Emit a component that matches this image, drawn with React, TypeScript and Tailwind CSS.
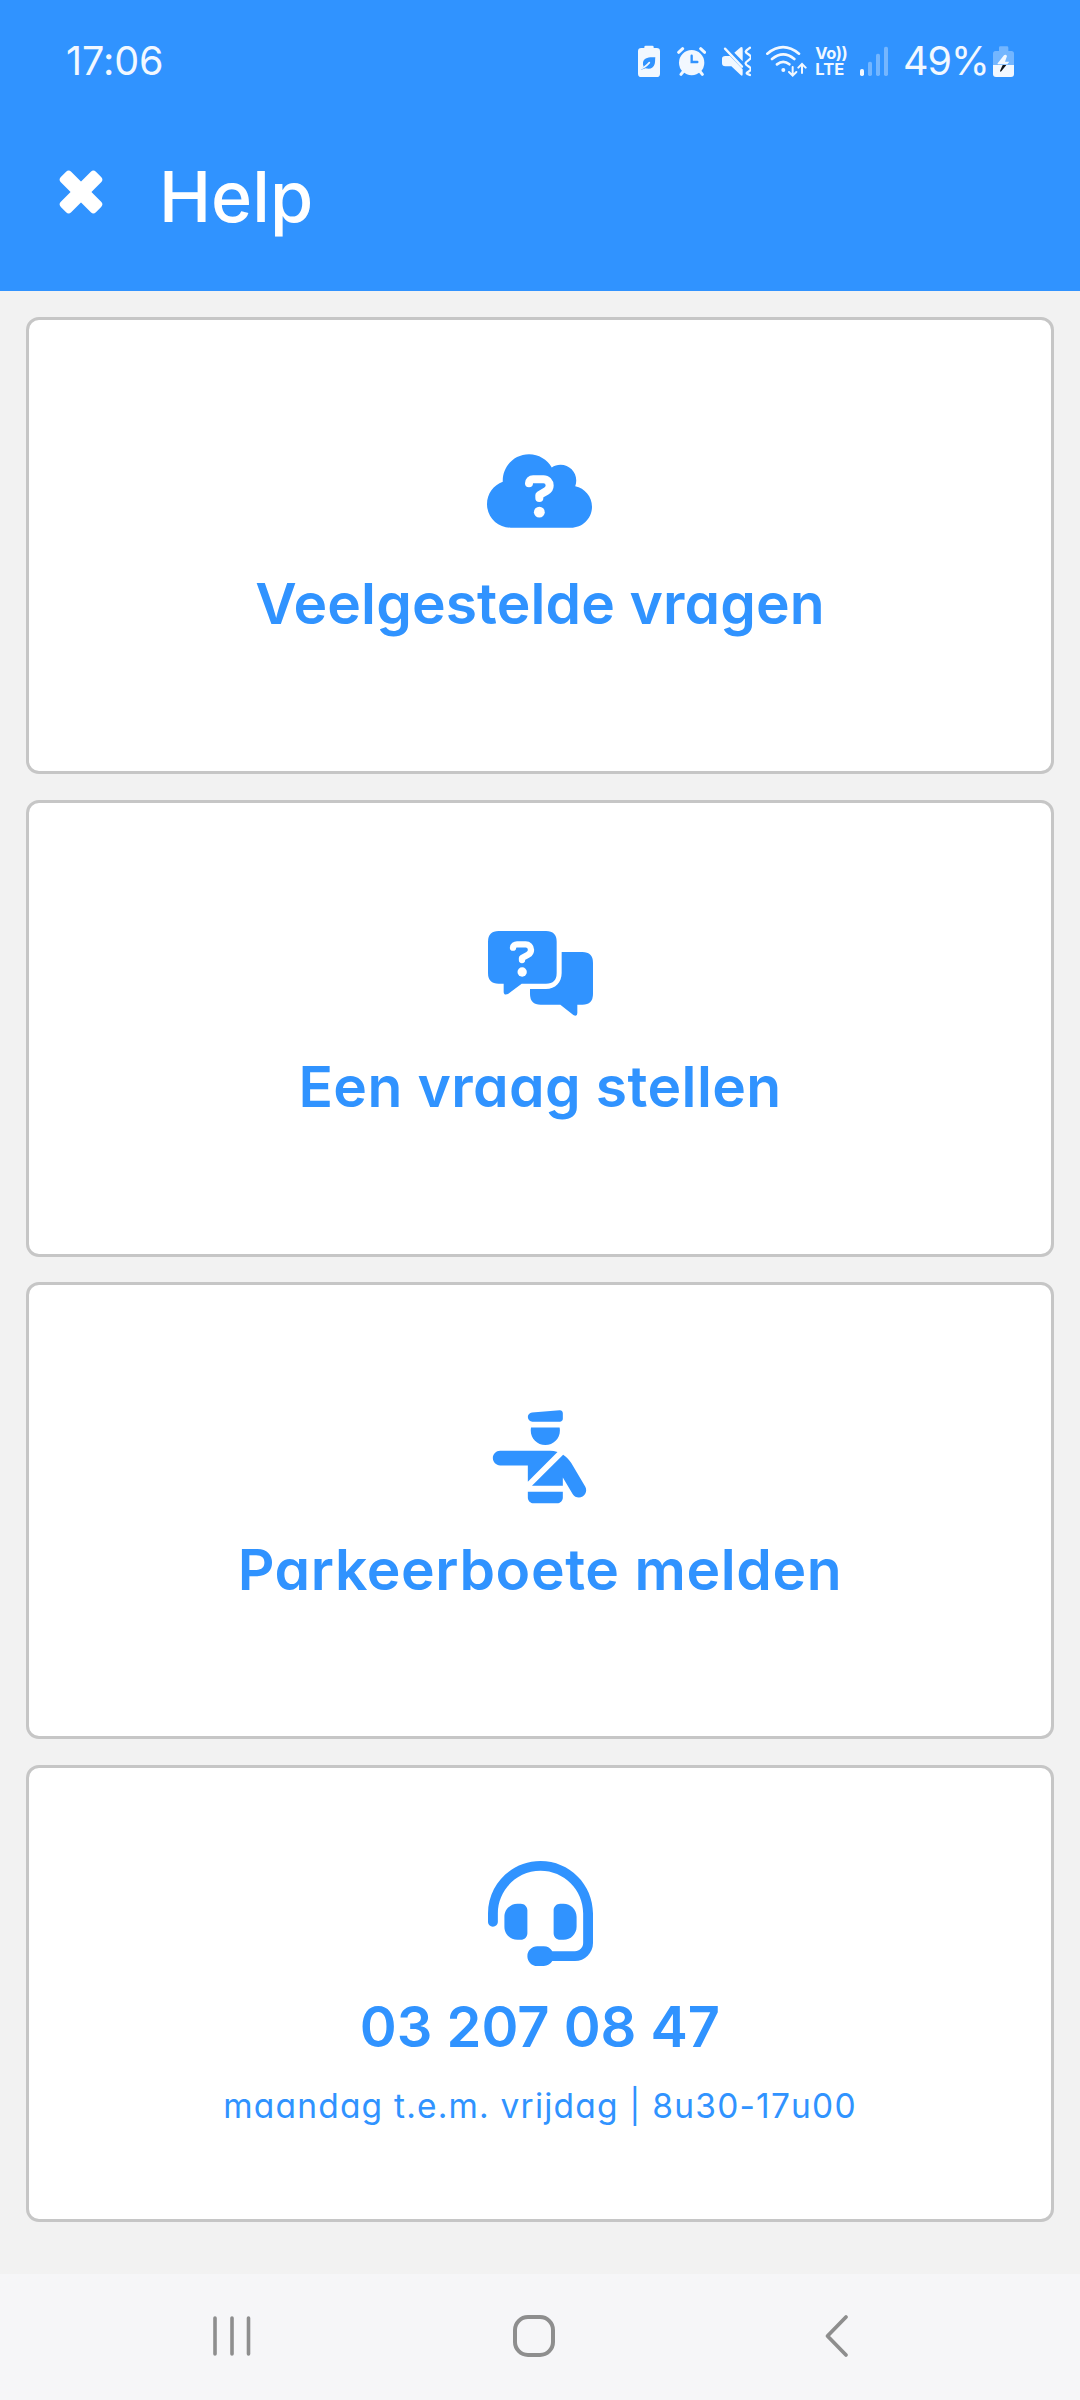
import React from 'react';
import { FaHeadset } from 'react-icons/fa6';

const BatterySaverIcon = () => (
  <svg viewBox="54 45 66 99" className="w-[22px] h-[33px]" fill="currentColor">
    <path d="M73 54v-3q0-4 4-4h20q4 0 4 4v3h9q10 0 10 10v67q0 10-10 10H64q-10 0-10-10V64q0-10 10-10z" />
    <path d="M106 82C86 80 70 84 69 98q-1 6 2 11-6 5-8 10 8-1 13-4 22 6 28-13c2-6 1-14 2-20z" fill="#3093ff" />
    <path d="M62 116q12-2 26-18" fill="none" stroke="currentColor" strokeWidth="5" strokeLinecap="round" />
  </svg>
);

const AlarmIcon = () => (
  <svg viewBox="170 45 88 99" className="w-[29.33px] h-[33px]" fill="none" stroke="currentColor" strokeLinecap="round">
    <circle cx="214" cy="98" r="38" fill="currentColor" stroke="none" />
    <path d="M175 67l12-11M253 67l-12-11M190 123l-8 10M238 123l8 10" strokeWidth="9" />
    <path d="M214 77v19h17" stroke="#3093ff" strokeWidth="7" />
  </svg>
);

const MuteVibrateIcon = () => (
  <svg viewBox="306 45 88 99" className="w-[29.33px] h-[33px]" fill="currentColor">
    <path d="M330 78l38 40v14q0 8-6 3l-28-26h-18q-10 0-10-9V86q0-8 10-8z" />
    <path d="M343 68l19-16q6-4 6 4v38z" />
    <path d="M315 56l51 54" fill="none" stroke="currentColor" strokeWidth="7" strokeLinecap="round" />
    <path d="M390 53c-16 11-16 13-5 20s11 10 0 18-11 11 0 18 11 10 0 16 0 8 5 10" fill="none" stroke="currentColor" strokeWidth="7" strokeLinecap="round" />
  </svg>
);

const WifiIcon = () => (
  <svg viewBox="437 45 123 99" className="w-[41px] h-[33px]" fill="none" stroke="currentColor" strokeWidth="8" strokeLinecap="round">
    <path d="M441 71q47-39 95 0M455 87q34-28 67 0M470 103q19-15 37 0" />
    <circle cx="489" cy="120" r="6" fill="currentColor" stroke="none" />
    <path d="M517 111v24M506 126l11 11 11-11M545 129v-25M534 113l11-11 11 11" strokeWidth="6" />
  </svg>
);

const SignalIcon = () => (
  <svg viewBox="120 45 84 99" className="w-7 h-[33px]" fill="currentColor">
    <rect x="120" y="117" width="12" height="21" rx="5" />
    <g opacity="0.35">
      <rect x="144" y="95" width="12" height="43" rx="5" />
      <rect x="168" y="71" width="12" height="67" rx="5" />
      <rect x="192" y="50" width="12" height="88" rx="5" />
    </g>
  </svg>
);

const ChargingIcon = () => (
  <svg viewBox="519 45 63 99" className="w-[21px] h-[33px]" fill="currentColor">
    <path d="M537 63V53q0-4 4-4h20q4 0 4 4v10h9q8 0 8 8v34h-63V71q0-8 8-8z" opacity="0.35" />
    <path d="M519 105h63v27q0 9-9 9h-45q-9 0-9-9z" />
    <path d="M552 76l-19 24q-2 3 2 3h27l6-8h-13l6-17q-4-6-9-2z" />
    <path d="M548 105l-8 18q0 4 4 1l15-19z" fill="#10151c" />
  </svg>
);

const CloseIcon = () => (
  <svg viewBox="-22 -22 44 44" className="w-11 h-11" fill="currentColor">
    <rect x="-24.8" y="-7.3" width="49.6" height="14.6" rx="3.6" transform="rotate(45)" />
    <rect x="-24.8" y="-7.3" width="49.6" height="14.6" rx="3.6" transform="rotate(-45)" />
  </svg>
);

const CloudQuestionIcon = () => (
  <svg viewBox="0 0 640 512" className="mr-px w-[105px] h-[84px]" fill="currentColor">
    <path d="M0 336c0 79.5 64.5 144 144 144h368c70.7 0 128-57.3 128-128 0-61.9-44-113.6-102.4-125.4 4.1-10.7 6.4-22.4 6.4-34.6 0-53-43-96-96-96-19.7 0-38.1 6-53.3 16.2C367 64.2 315.3 32 256 32 167.6 32 96 103.6 96 192c0 2.7.1 5.4.2 8.1C40.2 219.8 0 273.2 0 336z" />
    <path d="M256 209c0-14 11-25 25-25h63c22 0 38 17 38 39 0 14-8 26-20 33l-43 25v18" fill="none" stroke="#fff" strokeWidth="49" strokeLinecap="round" strokeLinejoin="round" />
    <circle cx="319" cy="385" r="33" fill="#fff" />
  </svg>
);

const MessagesQuestionIcon = () => (
  <svg viewBox="84 64 315 254" className="w-[105px] h-[84.67px]" fill="currentColor">
    <path d="M116 64h142q32 0 32 32v94q0 32-32 32h-73l-41 31q-13 5-13-7v-24h-15q-32 0-32-32V96q0-32 32-32z" />
    <path d="M305 127h62q32 0 32 32v94q0 32-32 32h-15v25q0 12-12 6l-39-31h-59q-32 0-32-32v-15h48c28 0 47-20 47-48z" />
    <path d="M159 114c0-6 6-10 12-10h26c9 0 16 7 16 16 0 7-3 12-9 15l-18 10v6" fill="none" stroke="#fff" strokeWidth="19" strokeLinecap="round" strokeLinejoin="round" />
    <circle cx="186.5" cy="187" r="14" fill="#fff" />
  </svg>
);

const OfficerIcon = () => (
  <svg viewBox="0 0 576 512" className="mr-[2px] w-[105px] h-[93.33px]" fill="currentColor">
    <path d="M246.9 14.1C234 15.2 224 26 224 39c0 13.8 11.2 25 25 25h151c8.8 0 16-7.2 16-16V17.4C416 8 408 .7 398.7 1.4L246.9 14.1zM240 112c0 44.2 35.8 80 80 80s80-35.8 80-80c0-5.5-.6-10.8-1.6-16H241.6c-1 5.2-1.6 10.5-1.6 16zM72 224c-22.1 0-40 17.9-40 40s17.9 40 40 40h152v89.4l162.8-162.9c-13.3-4.3-27.3-6.5-41.6-6.5H72zm345.7 20.9L246.6 416H416v-46.2l53.6 90.6c11.2 19 35.8 25.3 54.8 14.1s25.3-35.8 14.1-54.8l-76.2-128.9c-11.2-18.9-26.6-34.5-44.6-45.9zM224 448v32c0 17.7 14.3 32 32 32h128c17.7 0 32-14.3 32-32v-32H224z" />
  </svg>
);

interface HelpCardProps {
  icon: React.ReactNode;
  label: string;
  labelClass: string;
  padding: string;
  note?: string;
}

const HelpCard: React.FC<HelpCardProps> = ({ icon, label, labelClass, padding, note }) => (
  <button className={`flex h-[457px] w-full flex-col items-center rounded-[13px] border-3 border-[#c6c6c6] bg-white text-[#3093ff] ${padding}`}>
    {icon}
    <span className={`whitespace-nowrap font-semibold leading-[70px] ${labelClass}`}>{label}</span>
    {note && <span className="mt-[24px] whitespace-nowrap text-[33.5px] leading-[40px] tracking-[1.2px]">{note}</span>}
  </button>
);

export default function App() {
  return (
    <div className="flex h-[2400px] w-[1080px] flex-col overflow-hidden bg-[#f2f2f2] font-['Inter',sans-serif] [font-feature-settings:'cv11']">
      <header className="h-[291px] bg-[#3093ff] text-white">
        {/* status bar */}
        <div className="flex h-[78px] pl-[66px] pt-[45px] text-[#f2f8ff]">
          <span className="w-[572px] text-[39.5px] leading-[33px] tracking-[-0.1px]">17:06</span>
          <BatterySaverIcon />
          <div className="ml-[16.7px]"><AlarmIcon /></div>
          <div className="ml-4"><MuteVibrateIcon /></div>
          <div className="ml-[14.4px]"><WifiIcon /></div>
          <div className="ml-[8.6px] w-[32px] text-[16.5px] font-bold leading-[16px]">
            <div className="whitespace-nowrap tracking-[-0.4px]">Vo))</div>
            <div className="whitespace-nowrap">LTE</div>
          </div>
          <div className="ml-[12.7px]"><SignalIcon /></div>
          <span className="ml-[15px] w-[90px] text-[39.5px] leading-[33px] tracking-[-1px]">49%</span>
          <ChargingIcon />
        </div>

        {/* title bar */}
        <div className="flex pl-[59px] pt-[72px]">
          <div className="mt-5"><CloseIcon /></div>
          <h1 className="ml-[56px] mt-px text-[70px] font-medium leading-[92px]">Help</h1>
        </div>
      </header>

      <main className="flex h-[1983px] flex-col gap-[25.67px] px-[26px] pt-[26px]">
        <HelpCard icon={<CloudQuestionIcon />} label="Veelgestelde vragen" padding="pt-[128.5px]" labelClass="mt-[36.5px] text-[57px] tracking-[0.1px]" />
        <HelpCard icon={<MessagesQuestionIcon />} label="Een vraag stellen" padding="pt-[128.5px]" labelClass="mt-[36px] text-[57px] tracking-[0.4px]" />
        <HelpCard icon={<OfficerIcon />} label="Parkeerboete melden" padding="pt-[125px]" labelClass="mt-[31px] text-[57px] tracking-[0.6px]" />
        <HelpCard
          icon={<FaHeadset className="h-[105px] w-[105px]" />}
          label="03 207 08 47"
          padding="pt-[93px]"
          labelClass="mt-[26px] text-[56px]"
          note="maandag t.e.m. vrijdag | 8u30-17u00"
        />
      </main>

      <nav className="flex h-[126px] items-center bg-[#f6f6f8] pb-[2px] pl-[212px] text-[#8e8e8e]">
        <svg viewBox="0 0 40 42" className="h-[42px] w-10" stroke="currentColor" strokeWidth="3.6" strokeLinecap="round">
          <path d="M3 3v36M20 3v36M36.5 3v36" />
        </svg>
        <svg viewBox="0 0 42 42" className="ml-[261px] h-[42px] w-[42px]" fill="none" stroke="currentColor" strokeWidth="4">
          <rect x="2" y="2" width="38" height="38" rx="13" />
        </svg>
        <svg viewBox="0 0 26 44" className="ml-[269px] h-11 w-[26px]" fill="none" stroke="currentColor" strokeWidth="3.8" strokeLinecap="round" strokeLinejoin="round">
          <path d="M22 3L3.5 22 22 41" />
        </svg>
      </nav>
    </div>
  );
}
